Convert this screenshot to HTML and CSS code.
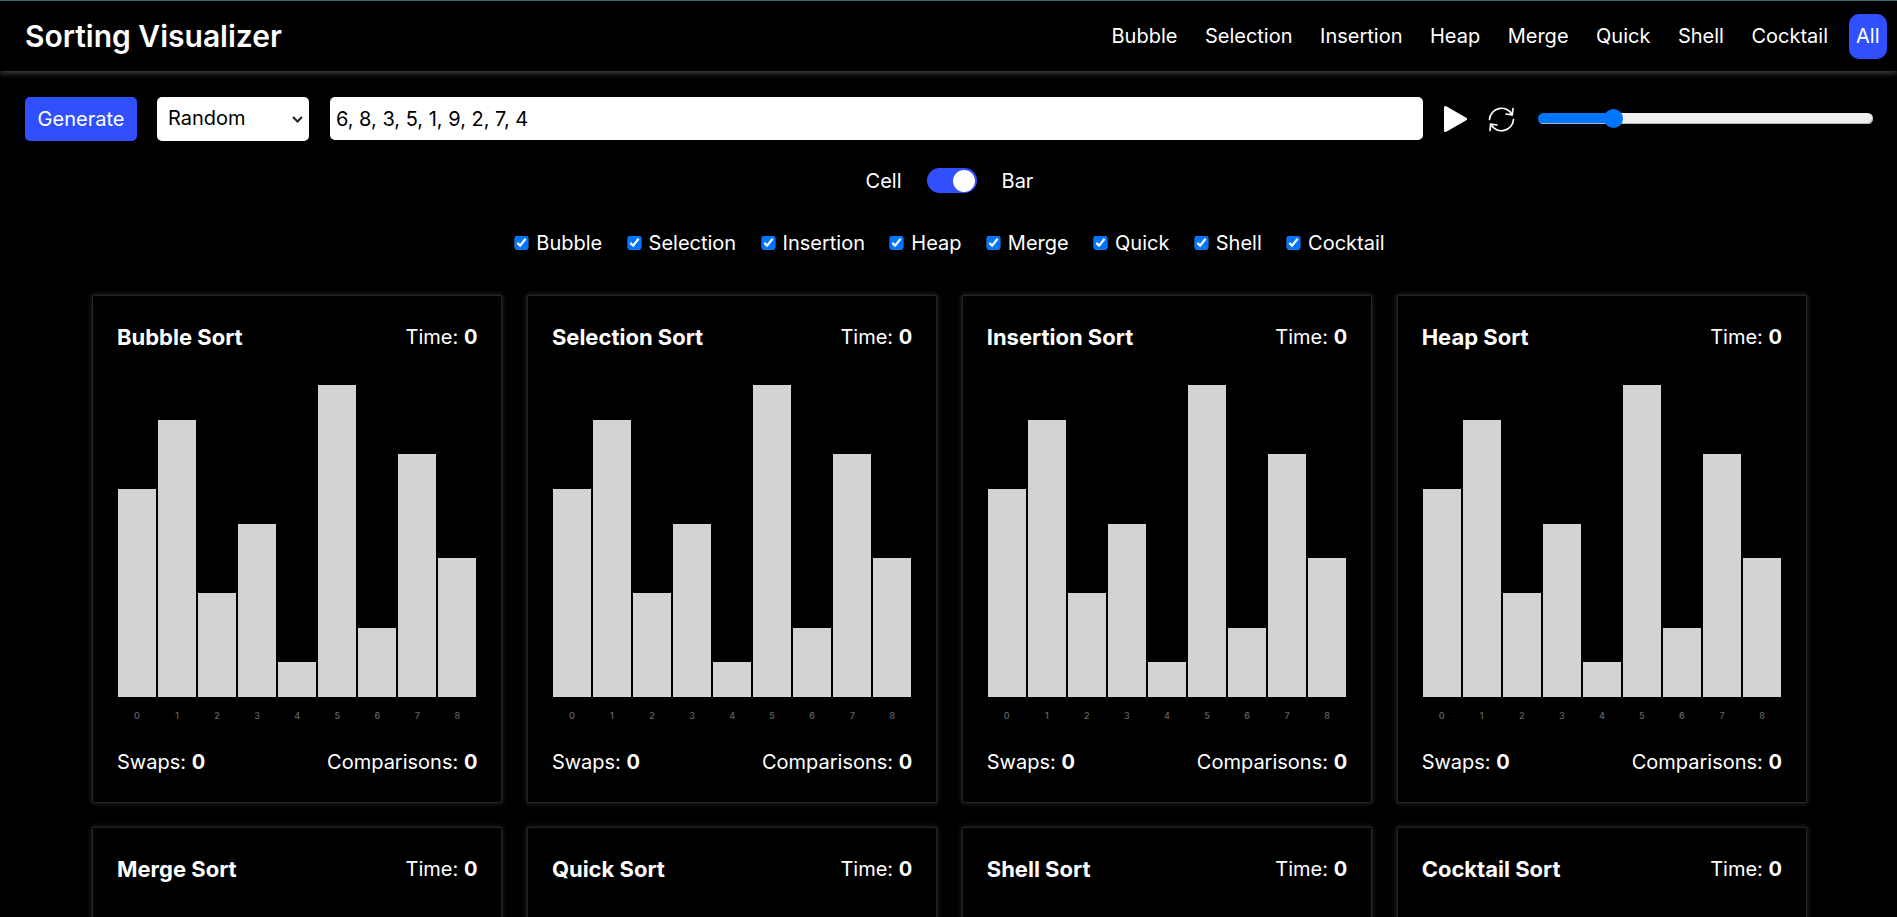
FILE: index.html
```html
<!DOCTYPE html>
<html lang="en">

<head>
    <meta charset="UTF-8">
    <meta name="viewport" content="width=device-width, initial-scale=1.0">
    <title>Sorting Visualizer</title>
    <link rel="stylesheet" href="styles.css">
</head>

<body>
    <nav class="navbar">
        <div class="brand">Sorting Visualizer</div>
        <div class="nav-links">
            <a href="#">Bubble</a>
            <a href="#">Selection</a>
            <a href="#">Insertion</a>
            <a href="#">Heap</a>
            <a href="#">Merge</a>
            <a href="#">Quick</a>
            <a href="#">Shell</a>
            <a href="#">Cocktail</a>
            <a href="#" class="active">All</a>
        </div>
    </nav>

    <div class="controls">
        <button class="generate">Generate</button>
        <select class="array-type">
            <option>Random</option>
            <option>Sorted</option>
            <option>Reversed</option>
        </select>
        <input class="array-input" type="text" value="6, 8, 3, 5, 1, 9, 2, 7, 4">
        <button class="icon-btn play" aria-label="Play">
            <svg width="23" height="26" viewBox="0 0 23 26">
                <polygon points="1.5,1.5 21.5,13 1.5,24.5" fill="#fff" stroke="#fff" stroke-width="3" stroke-linejoin="round" />
            </svg>
        </button>
        <button class="icon-btn reset" aria-label="Reset">
            <svg width="27" height="27" viewBox="0 0 27 27" fill="none" stroke="#fff" stroke-width="1.7" stroke-linecap="round" stroke-linejoin="round">
                <path d="M1.5 13.5 A12 12 0 0 1 24 8.5" />
                <path d="M25.5 13.5 A12 12 0 0 1 3 18.5" />
                <path d="M25 2.5 L24.3 8.8 L18 8" />
                <path d="M2 24.5 L2.7 18.2 L9 19" />
            </svg>
        </button>
        <input class="speed" type="range" min="0" max="100" value="21">
    </div>

    <div class="view-toggle">
        <span>Cell</span>
        <span class="switch"><span class="knob"></span></span>
        <span>Bar</span>
    </div>

    <div class="algo-checks" id="checks"></div>

    <div class="cards" id="cards"></div>

    <script src="script.js"></script>
</body>

</html>
```

FILE: styles.css
```css
html,
body {
    height: 100%;
    overflow: hidden;
}

body {
    font-family: Inter, "Liberation Sans", sans-serif;
    background-color: #000;
    color: #fff;
    margin: 0;
    font-size: 20px;
}

.navbar {
    height: 70px;
    border-top: 1px solid #3f6f70;
    padding: 0 10px 0 25px;
    display: flex;
    align-items: center;
    justify-content: space-between;
    box-shadow: 0 2px 6px rgba(255, 255, 255, 0.28);
}

.brand {
    font-size: 30px;
    font-weight: 600;
}

.nav-links {
    display: flex;
    align-items: center;
    gap: 2.5px;
}

.nav-links a {
    color: #fff;
    text-decoration: none;
    padding: 0 12.5px;
    line-height: 45px;
    border-radius: 10px;
}

.nav-links a.active {
    background-color: #304ffe;
    padding: 0 7.5px;
    margin-left: 5.5px;
}

.controls {
    display: flex;
    align-items: center;
    padding: 26px 24px 0 25px;
    height: 44px;
}

.generate {
    width: 112px;
    height: 44px;
    background-color: #304ffe;
    color: #fff;
    border: none;
    border-radius: 5px;
    font: inherit;
    margin-right: 20px;
}

.array-type {
    appearance: none;
    width: 152px;
    height: 44px;
    border: none;
    border-radius: 5px;
    background: #fff url("data:image/svg+xml,%3Csvg xmlns='http://www.w3.org/2000/svg' width='11' height='7' viewBox='0 0 11 7'%3E%3Cpath d='M1 1 L5.5 5.5 L10 1' fill='none' stroke='%23222' stroke-width='2'/%3E%3C/svg%3E") no-repeat right 6px center;
    color: #000;
    font: inherit;
    padding: 0 11px 2px;
    margin-right: 21px;
}

.array-input {
    flex: 1;
    min-width: 0;
    height: 43px;
    align-self: flex-start;
    box-sizing: border-box;
    border: none;
    border-radius: 5px;
    background-color: #fff;
    color: #000;
    font: inherit;
    padding: 0 6px;
    margin-right: 21px;
}

.icon-btn {
    background: none;
    border: none;
    padding: 0;
    display: flex;
}

.play {
    margin-right: 21px;
}

.reset {
    margin-right: 23px;
}

.speed {
    appearance: none;
    align-self: flex-start;
    width: 335px;
    height: 11px;
    margin: 16px 0 0;
    border-radius: 6px;
    background: linear-gradient(to right, #0075ff 23%, #efefef 23%);
    box-shadow: inset -1px -1px 0 #b5b5b5;
}

.speed::-webkit-slider-thumb {
    appearance: none;
    width: 19px;
    height: 19px;
    border-radius: 50%;
    background-color: #0075ff;
}

.view-toggle {
    display: flex;
    align-items: center;
    justify-content: center;
    gap: 25px;
    margin-top: 27px;
    padding-left: 2px;
    height: 25px;
}

.switch {
    width: 50px;
    height: 25px;
    border-radius: 13px;
    background-color: #304ffe;
    display: flex;
    align-items: center;
    justify-content: flex-end;
    padding-right: 2px;
    box-sizing: border-box;
}

.knob {
    width: 22px;
    height: 22px;
    border-radius: 50%;
    background-color: #fff;
}

.algo-checks {
    display: flex;
    justify-content: center;
    gap: 24.4px;
    margin-top: 37px;
    padding-left: 2px;
    height: 26px;
}

.algo-checks label {
    display: flex;
    align-items: center;
    gap: 7px;
}

.algo-checks input {
    zoom: 1.15;
    margin: 0;
}

.cards {
    display: grid;
    grid-template-columns: repeat(4, 1fr);
    gap: 23.5px 24.5px;
    padding: 0 90px 0 92px;
    margin-top: 39px;
}

.card {
    height: 508px;
    box-sizing: border-box;
    padding: 26px 25px 24px;
    border: 1px solid #242424;
    box-shadow: 0 0 5px rgba(255, 255, 255, 0.2);
    display: flex;
    flex-direction: column;
}

.card-row {
    display: flex;
    align-items: center;
    justify-content: space-between;
    height: 30px;
    margin: 0 -1px;
}

.card-title {
    font-weight: 700;
    font-size: 22px;
}

.bars {
    margin-top: 33px;
    height: 312px;
    display: flex;
    align-items: flex-end;
    gap: 2px;
}

.bar {
    flex: 1;
    background-color: #d3d3d3;
}

.indexes {
    display: flex;
    gap: 2px;
    margin-top: 12px;
    margin-bottom: 24px;
    height: 14px;
}

.indexes span {
    flex: 1;
    text-align: center;
    font-size: 9px;
    font-weight: 500;
    line-height: 14px;
    color: #666;
}
```

FILE: script.js
```js
const values = [6, 8, 3, 5, 1, 9, 2, 7, 4];
const algos = ['Bubble', 'Selection', 'Insertion', 'Heap', 'Merge', 'Quick', 'Shell', 'Cocktail'];
const unit = 312 / 9;

const checks = document.getElementById('checks');
const cards = document.getElementById('cards');

algos.forEach(name => {
    checks.innerHTML += `<label><input type="checkbox" checked>${name}</label>`;

    const bars = values.map(v => `<div class="bar" style="height: ${v * unit}px"></div>`).join('');
    const indexes = values.map((v, i) => `<span>${i}</span>`).join('');

    cards.innerHTML += `
        <div class="card">
            <div class="card-row">
                <span class="card-title">${name} Sort</span>
                <span>Time: <b>0</b></span>
            </div>
            <div class="bars">${bars}</div>
            <div class="indexes">${indexes}</div>
            <div class="card-row">
                <span>Swaps: <b>0</b></span>
                <span>Comparisons: <b>0</b></span>
            </div>
        </div>`;
});
```
